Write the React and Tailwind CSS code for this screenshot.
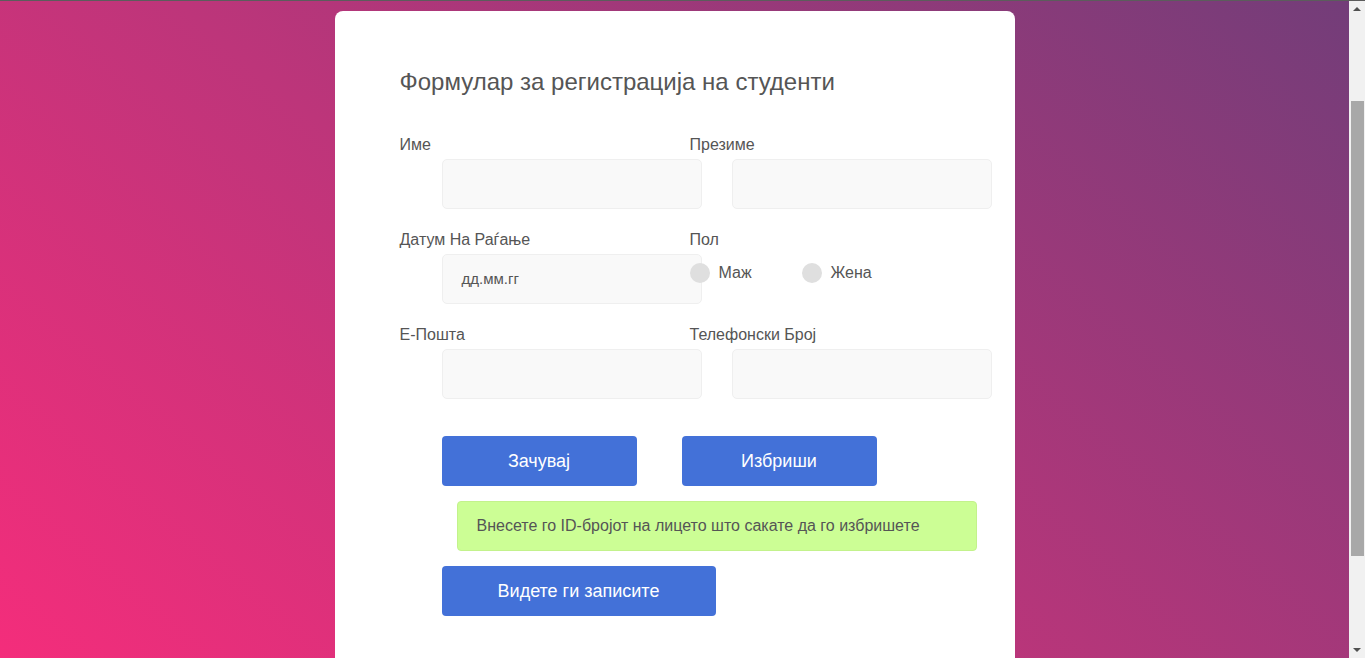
import React from "react";

const font = { fontFamily: '"Liberation Sans", Arial, sans-serif' };

function Field({ label, children }) {
  return (
    <div className="flex flex-col">
      <div className="pt-px text-[16px] leading-[18px] text-[#555]">{label}</div>
      {children}
    </div>
  );
}

function Input({ placeholder }) {
  return (
    <div className="mt-[5px] ml-[42px] w-[260px] h-[50px] rounded-[5px] border border-[#efefef] bg-[#f9f9f9] flex items-center pl-[19px] text-[15px] text-[#555]">
      {placeholder}
    </div>
  );
}

function Radio({ label, wide }) {
  return (
    <div className={"flex items-center " + (wide ? "w-[112px]" : "")}>
      <div className="w-[20px] h-[20px] rounded-full bg-[#dfdfdf]" />
      <span className="ml-[9px] text-[16px] leading-[18px] text-[#555]">{label}</span>
    </div>
  );
}

export default function App() {
  return (
    <div className="w-[1365px] h-[658px] overflow-hidden flex flex-col" style={font}>
      <div className="h-px bg-[#5c5c5c] w-full" />
      <div className="flex flex-1 min-h-0">
        <div className="flex-1 flex justify-center bg-[linear-gradient(40deg,#f42d7b,#bd357a_45%,#733d79)]">
          <div className="mt-[10px] w-[680px] h-[700px] bg-white rounded-[8px] pl-[65px] pt-[57px]">
            <h1 className="text-[24px] leading-[28px] text-[#555] font-normal">
              Формулар за регистрација на студенти
            </h1>
            <div className="mt-[39px] grid grid-cols-[290px_290px]">
              <Field label="Име"><Input /></Field>
              <Field label="Презиме"><Input /></Field>
            </div>
            <div className="mt-[21px] grid grid-cols-[290px_290px]">
              <Field label="Датум На Раѓање"><Input placeholder="дд.мм.гг" /></Field>
              <Field label="Пол">
                <div className="mt-[14px] flex items-center">
                  <Radio label="Маж" wide />
                  <Radio label="Жена" />
                </div>
              </Field>
            </div>
            <div className="mt-[21px] grid grid-cols-[290px_290px]">
              <Field label="Е-Пошта"><Input /></Field>
              <Field label="Телефонски Број"><Input /></Field>
            </div>
            <div className="mt-[37px] ml-[42px] flex gap-[45px]">
              <button className="w-[195px] h-[50px] rounded-[4px] bg-[#4371d8] text-white text-[18px]">Зачувај</button>
              <button className="w-[195px] h-[50px] rounded-[4px] bg-[#4371d8] text-white text-[18px]">Избриши</button>
            </div>
            <div className="mt-[15px] ml-[57px] w-[520px] h-[50px] rounded-[4px] border border-[#c3f28c] bg-[#ccfe95] flex items-center pl-[19px] text-[16px] text-[#555]">
              Внесете го ID-бројот на лицето што сакате да го избришете
            </div>
            <div className="mt-[15px] ml-[42px]">
              <button className="w-[274px] h-[50px] rounded-[4px] bg-[#4371d8] text-white text-[18px]">Видете ги записите</button>
            </div>
          </div>
        </div>
        <div className="w-[16px] bg-[#f1f1f1] flex flex-col items-center relative">
          <div className="h-[16px] w-full flex items-center justify-center">
            <div className="w-0 h-0 border-l-[4px] border-r-[4px] border-b-[4px] border-l-transparent border-r-transparent border-b-[#505050]" />
          </div>
          <div className="mt-[84px] w-[13px] h-[455px] bg-[#a8a8a8]" />
          <div className="mt-auto h-[16px] w-full flex items-center justify-center">
            <div className="w-0 h-0 border-l-[4px] border-r-[4px] border-t-[4px] border-l-transparent border-r-transparent border-t-[#505050]" />
          </div>
        </div>
      </div>
    </div>
  );
}
